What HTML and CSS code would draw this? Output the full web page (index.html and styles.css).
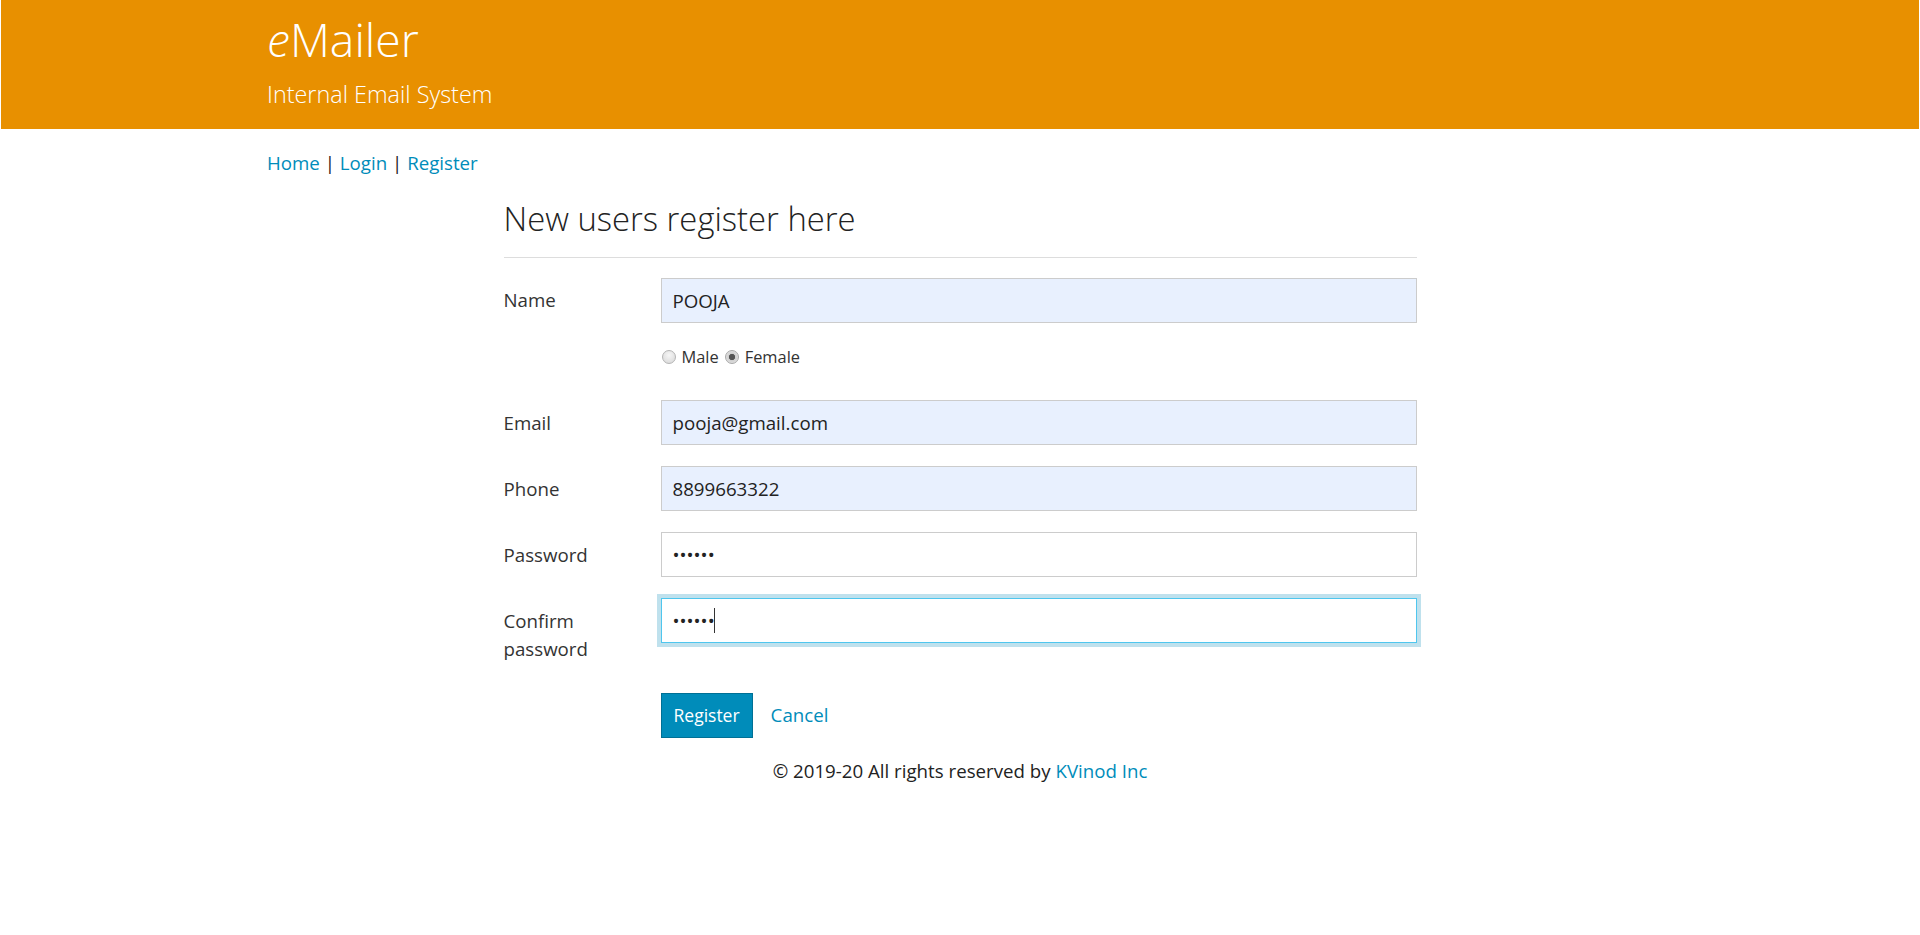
FILE: index.html
```html
<!DOCTYPE html>
<html lang="en">
<head>
<meta charset="utf-8">
<title>eMailer - Register</title>
<link rel="stylesheet" href="styles.css">
</head>
<body>
<header class="masthead">
  <div class="wrap">
    <h1 class="brand"><em>e</em>Mailer</h1>
    <h4 class="tagline">Internal Email System</h4>
  </div>
</header>
<nav class="wrap topnav">
  <a href="#">Home</a> | <a href="#">Login</a> | <a href="#">Register</a>
</nav>
<main class="register">
  <h3 class="register-title">New users register here</h3>
  <hr class="rule">
  <form class="reg-form">
    <div class="field">
      <label class="field-label">Name</label>
      <div class="field-control"><input class="text-input autofill" type="text" value="POOJA"></div>
    </div>
    <div class="gender-row">
      <input class="radio" type="radio" name="g"><span class="radio-label">Male</span>
      <input class="radio" type="radio" name="g" checked><span class="radio-label">Female</span>
    </div>
    <div class="field">
      <label class="field-label">Email</label>
      <div class="field-control"><input class="text-input autofill" type="text" value="pooja@gmail.com"></div>
    </div>
    <div class="field">
      <label class="field-label">Phone</label>
      <div class="field-control"><input class="text-input autofill" type="text" value="8899663322"></div>
    </div>
    <div class="field">
      <label class="field-label">Password</label>
      <div class="field-control"><input class="text-input" type="password" value="123456"></div>
    </div>
    <div class="field field-last">
      <label class="field-label">Confirm password</label>
      <div class="field-control caret-host"><input class="text-input focused" type="password" value="123456"><span class="caret"></span></div>
    </div>
    <div class="actions">
      <button class="btn" type="button">Register</button>
      <a class="cancel" href="#">Cancel</a>
    </div>
  </form>
</main>
<footer class="site-footer">© 2019-20 All rights reserved by <a href="#">KVinod Inc</a></footer>
</body>
</html>
```
FILE: styles.css
```css
* { box-sizing: border-box; }
html, body { margin: 0; padding: 0; }
body {
  font-family: "Open Sans", "Liberation Sans", sans-serif;
  color: #222;
  background: #fff;
  font-size: 18.7px;
  line-height: 1.5;
}
a { color: #008cba; text-decoration: none; }

.wrap { width: 1386px; margin: 0 auto; }

.masthead {
  background: #e89000;
  height: 128.6px;
  margin: 0 1px;
  color: #fff;
  padding-top: 14px;
}
.brand {
  margin: 0;
  font-weight: 300;
  font-size: 46.3px;
  line-height: 52px;
}
.brand em { font-style: italic; }
.tagline {
  margin: 12px 0 0;
  font-weight: 300;
  font-size: 23.4px;
  line-height: 32px;
}

.topnav {
  margin-top: 20px;
  line-height: 28px;
  color: #222;
}

.register { width: 913px; margin: 0 auto; }
.register-title {
  margin: 20px 0 0;
  font-weight: 300;
  font-size: 32.8px;
  line-height: 44px;
  color: #222;
}
.rule {
  border: 0;
  border-top: 1px solid #ddd;
  margin: 16px 0 20px;
}

.reg-form { display: flex; flex-direction: column; }
.field { display: flex; align-items: flex-start; margin-bottom: 21px; }
.field-label {
  width: 157px;
  flex: none;
  padding: 8.5px 17px 0 0;
  line-height: 28px;
  color: #333;
}
.field-control { flex: 1; }
.caret-host { position: relative; }
.text-input {
  display: block;
  width: 100%;
  height: 45px;
  border: 1px solid #ccc;
  background: #fff;
  padding: 0 11px;
  font-family: inherit;
  font-size: 18.7px;
  color: #222;
  outline: none;
}
.text-input.autofill { background: #e8f0fe; }
.text-input.focused {
  border-color: #4fc6ee;
  box-shadow: 0 0 0 4px #bfe1ed;
}
.caret {
  position: absolute;
  left: 53px;
  top: 10px;
  width: 1.5px;
  height: 25px;
  background: #333;
}

.gender-row {
  margin: 3.5px 0 33px 157px;
  display: flex;
  align-items: center;
  height: 20px;
  font-size: 16.4px;
  color: #333;
}
.radio {
  appearance: none;
  -webkit-appearance: none;
  flex: none;
  width: 14px;
  height: 14px;
  margin: 0 6px 0 1px;
  border-radius: 50%;
  border: 1px solid #b4b4b4;
  background: radial-gradient(circle at 50% 35%, #f6f6f6, #d6d6d6);
}
.radio:checked {
  background: radial-gradient(circle, #555 0 2.8px, #cfcfcf 3.5px, #eeeeee 100%);
  border-color: #a8a8a8;
}
.radio-label { margin-right: 5px; }

.field-last { margin-bottom: 0; }
.actions {
  margin: 30px 0 0 157px;
  display: flex;
  align-items: center;
  gap: 18px;
}
.btn {
  background: #008cba;
  border: 1px solid #007095;
  color: #fff;
  font-family: inherit;
  font-size: 17.5px;
  height: 45px;
  padding: 0 12px;
}
.cancel { line-height: 28px; }

.site-footer {
  text-align: center;
  margin-top: 19.5px;
  line-height: 28px;
}
```
